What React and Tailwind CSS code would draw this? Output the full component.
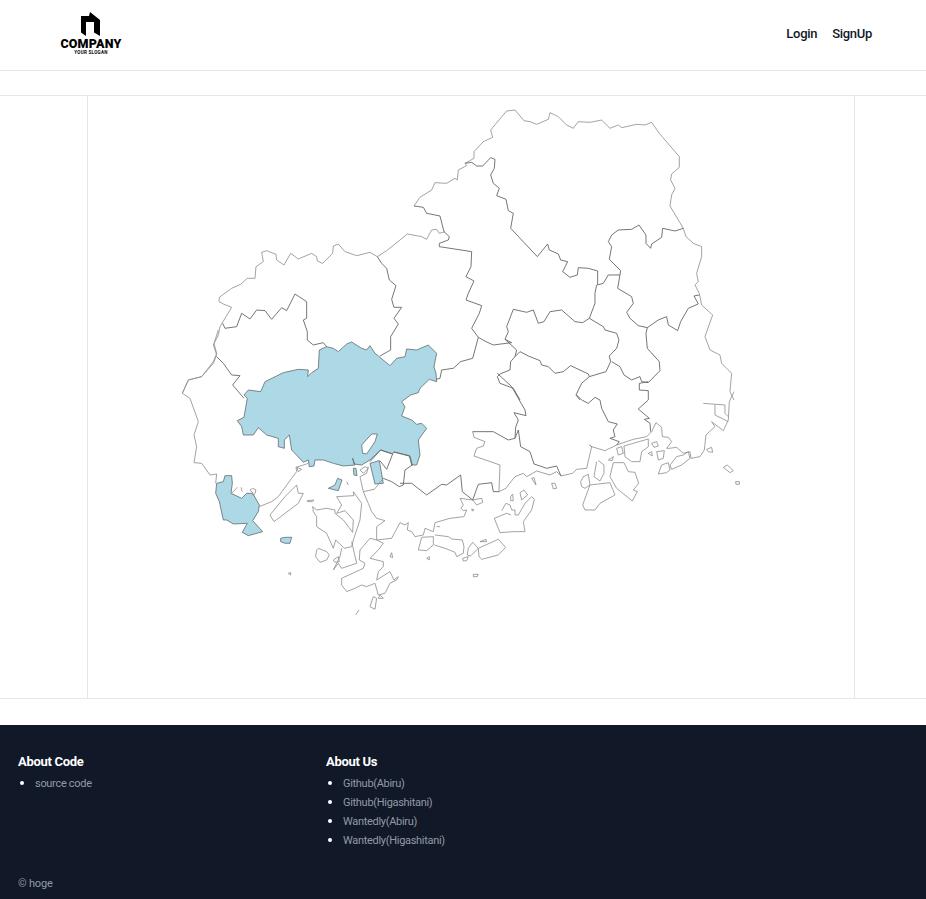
const FONT = 'Roboto, "Noto Sans", sans-serif'

// traced from the reference, grouped by the crop they were read from (3x coordinates)
const west = {
  origin: [170, 330],
  fill: [
    '448,60 470,50 490,55 505,65 530,42 545,36 575,55 590,60 600,47 615,70 625,78 660,107 680,85 705,80 710,57 740,60 775,45 800,70 792,110 798,130 800,155 778,148 750,175 745,188 722,195 695,215 705,230 695,258 725,270 740,283 755,280 770,295 745,330 750,375 740,405 725,405 718,378 672,366 668,372 632,360 600,390 575,405 552,402 548,385 555,405 520,408 490,400 460,390 435,390 432,408 418,410 415,390 400,397 365,360 358,315 343,330 343,355 325,350 325,325 290,315 265,293 250,315 220,315 215,290 202,272 222,262 232,205 222,195 235,180 272,185 285,155 340,128 385,118 415,120 413,140 425,128 445,115',
    '600,400 628,392 640,460 615,462',
    '475,475 495,465 503,445 516,450 505,482',
    '550,415 558,415 561,437 552,435',
    '140,460 160,455 165,437 185,437 187,460 183,490 215,505 230,490 248,490 268,525 265,545 248,572 278,605 235,617 217,607 232,580 190,582 170,570 160,570 148,515 137,490',
    '332,625 345,622 365,622 360,640 345,640 332,635',
  ],
  holes: ['575,345 605,312 622,312 615,335 590,372 578,370'],
  outer: [
    '145,0 132,40 140,70 130,95 95,140 55,150 37,190 60,205 85,275 72,315 80,350 72,398 95,400 120,435 140,432 137,460',
    '268,530 305,515 325,500 365,445 380,425 378,412 400,405 415,400',
    '300,555 345,500 380,465 385,490 400,490 385,520 312,575 300,555',
    '428,530 430,545 440,560 440,590 470,610 490,655 497,630 523,655 545,650 550,630 570,570 575,520 550,485 552,497 500,500 515,525 500,550 525,542 550,570 548,607 520,570 495,550 495,540 470,535 440,540 428,530',
    '545,635 560,700 515,715 505,700 490,720 510,680 515,655',
    '580,485 595,520 605,545 620,565 645,572 620,590 620,630 665,625 690,578',
    '620,630 640,640 625,660 600,685 640,695 640,710 625,725 620,750 660,725 672,750 685,740 680,750 660,760 645,790 625,795 615,760 590,770 575,765 555,775 530,785 515,765 515,745 580,715 585,700 568,690 570,660 600,625 620,630',
    '600,830 610,800 620,805 615,838 600,830',
    '630,795 640,805 625,805 630,795',
    '557,855 567,840',
    '355,730 362,728 362,735 355,730',
    '445,655 470,665 478,675 470,690 450,697 437,680 440,660 445,655',
    '490,690 505,680 508,695 495,697 490,690',
    '660,680 665,668 668,683 660,680',
    '412,512 432,510 428,515 412,515 412,512',
    '248,475 258,480 255,490 250,497 247,487 240,480 248,475',
    '185,490 202,472',
    '213,472 217,485',
    '530,455 535,465',
    '380,412 395,418 385,425 380,412',
    '570,420 585,410 595,415 580,430 570,420',
    '570,440 590,430 595,410',
    '570,440 580,485 613,478 640,445',
  ],
  inner: [
    '140,80 160,100 185,135 210,137 188,165 222,205',
    '600,395 632,360 668,372 650,418 630,392',
    '672,366 720,378 727,405 705,420 700,465 688,470 665,455 640,445',
  ],
}

const northWest = {
  origin: [170, 220],
  outer: [
    '37,520 55,480 95,470 130,430 140,405 130,375 145,345 150,320 185,262 160,252 147,245 148,232 185,205 212,193 232,175 255,175 258,140 280,125 275,97 290,92 318,103 320,120 342,135 362,100 385,117 425,100 440,110 442,123 458,130 488,100 490,78 505,72 525,95 560,107 600,97 622,110 650,92 690,60 712,42 755,50 770,58 785,30 800,28 808,40 825,35',
  ],
  inner: [
    '622,110 635,130 650,145 658,180 678,197 665,238 672,262 695,262 672,295 685,312 662,350 662,390 630,408',
    '158,310 165,325 200,320 215,280 240,297 260,270 285,272 305,298 335,263 350,272 375,222 410,245 410,295 400,300 412,335 412,360 430,375 460,368 470,380',
  ],
}

const north = {
  origin: [400, 100],
  outer: [
    '42,318 60,292 95,270 105,248 140,250 165,235 172,240 175,210 200,197 195,190 222,175 222,155 250,125 278,112 272,90 320,33 345,30 372,62 390,65 410,73 445,58 450,38 475,50 500,75 520,85 535,65 570,67 605,60 630,85 655,75 665,83 710,73 735,75 755,67 778,100 838,170 838,202 815,222 812,240 825,265 815,285 810,318 850,385 858,410 880,430 905,440 905,470 890,520 895,545 885,555 898,580 905,615 938,645 915,710 930,750 960,765 965,790 995,820 990,875 1002,900',
  ],
  inner: [
    '42,318 70,322 80,340 120,348 132,395 148,410 145,420 118,430 118,440 215,455 213,500 198,530 222,543 205,580 198,600 245,617 238,640 215,685 235,712 218,775 182,785 160,805 125,810 120,835 108,838',
    '195,190 215,187 230,198 248,198 272,173 285,178 283,205 272,225 280,250 298,265 290,287 318,298 325,332 340,340 332,385 412,470 443,432 448,450 475,462 482,480 503,485 488,515 510,532 532,525 535,503 565,505 593,513 593,555 610,550 625,525 660,525 662,512 628,478 635,440 625,425 635,405 655,390 695,388 717,375 738,405 738,430 752,445 755,432 785,412 788,385 825,393 850,385',
    '660,525 653,565 695,590 700,610 680,637 690,655 715,677 742,683 775,660 800,650 805,675 833,692 842,665 865,625 895,612 882,588 898,585',
    '590,555 585,580 585,610 568,655 548,668 525,665 485,630 450,635 432,665 415,670 400,630 380,637 340,628 320,680 325,695 315,718 335,728 280,735 258,725 235,712',
    '568,655 610,680 615,690 650,700 657,720 650,745 628,768 632,785 618,815 568,830',
    '742,683 738,700 742,745 778,785 780,812 745,848 725,845 720,830 695,840 672,825 660,800 635,785',
    '315,718 350,750 345,770 332,785 330,810 300,822 292,830 300,850 340,865 360,900',
    '345,770 360,755 385,768 420,782 425,795 445,800 465,820 490,815 512,797 565,822 568,830 545,850 528,885 540,900',
  ],
}

const southEast = {
  origin: [400, 340],
  outer: [
    '1002,155 988,185 985,240 970,272 935,245 945,260 918,285 913,330 900,350 873,355 870,335 850,340 830,322 808,325 800,325 815,305 805,292 787,290 785,262 768,248 755,275 740,290',
    '910,190 975,195 975,220 985,230',
    '945,195 945,225 985,245',
    '218,275 222,292 255,305 250,318 230,325 222,348 300,375 297,455 318,445 325,435 345,410 370,400 380,410 410,393 450,405 470,395 483,408 518,400 530,388 560,385 575,320 615,332 650,315 700,298 740,290',
    '548,495 570,435 630,428 645,465 600,490 585,510 555,510 548,495',
    '542,425 550,410 565,403 570,435 555,445 545,440 542,425',
    '595,362 612,375 612,400 600,423 582,410 590,365',
    '625,360 640,350 637,362 625,360',
    '630,410 640,368 672,368 685,395 705,397 716,430 700,450 712,455 697,483 650,445 630,410',
    '650,325 665,320 670,340 655,345 650,325',
    '672,318 700,310 745,297 745,320 725,335 720,365 695,365 675,350 672,318',
    '755,310 770,305 775,318 762,322 755,310',
    '745,340 755,335 757,348 745,340',
    '770,335 793,332 790,355 775,360 770,335',
    '775,402 785,375 805,368 810,390 800,398 775,402',
    '810,375 830,350 850,345 865,335 870,355 845,375 815,388 810,375',
    '920,328 935,322 938,337 925,335 920,328',
    '970,382 982,375 1000,392 990,398 970,382',
    '1007,425 1018,425 1018,433 1008,433 1007,425',
    '395,415 402,413 408,435 395,415',
    '455,430 465,430 470,445 460,447 455,430',
    '332,470 338,462 340,482 332,482 332,470',
    '360,458 372,450 383,465 365,480 360,458',
    '305,512 318,490 330,495 335,510 345,510 345,525 355,525 375,490 395,470 403,478 395,510 370,545 375,575 340,575 300,578 283,535 300,528 320,520 333,525',
    '218,480 245,475 248,487 230,495 218,480',
    '215,507 222,510 217,513 215,507',
    '110,560 120,560',
    '240,605 258,598 260,605 240,605',
    '205,625 218,607 235,625 212,648 202,645 205,625',
    '235,625 295,598 317,622 295,645 245,658 237,650 235,625',
    '188,655 205,650 200,662 190,663 188,655',
    '220,703 235,703 232,710 220,710 220,703',
    '80,655 88,650 88,660 80,655',
    '55,630 65,592 100,590 100,615 80,632 55,630',
    '105,585 145,590 155,597 187,600 192,620 190,640 170,650 165,637 135,625 103,615',
    '218,480 180,475 190,495 183,505 190,512 200,510 192,530 150,535 105,548 100,575 75,565 70,585 45,590 35,575 22,570 25,548 15,555 0,548',
  ],
  inner: [
    '0,430 35,430 80,465 125,433 140,435 182,405 187,455 218,480 235,433 275,428 280,455 297,455',
    '218,275 280,275 325,300 345,295 355,270 362,320 390,335 402,372 420,378 440,385 470,378 483,408',
    '292,100 335,140 375,210 378,227 342,218 355,240 347,262 345,295',
    '530,165 545,180 565,190 585,172 600,180 605,205 625,245 652,252 640,270 645,290 630,295 658,305 650,315',
    '745,125 718,130 718,150 745,152 745,180 715,207 748,235 733,238 750,250 752,275',
    '575,320 568,315',
  ],
}

const MapLayer = ({ layer }) => (
  <g transform={`translate(${layer.origin[0]} ${layer.origin[1]}) scale(0.3333)`}>
    {layer.fill?.map((p, i) => (
      <polygon key={i} points={p} fill="#add8e6" stroke="#5f6b70" strokeWidth="0.8" vectorEffect="non-scaling-stroke" />
    ))}
    {layer.holes?.map((p, i) => (
      <polygon key={i} points={p} fill="#fff" stroke="#5f6b70" strokeWidth="0.8" vectorEffect="non-scaling-stroke" />
    ))}
    {layer.outer?.map((p, i) => (
      <polyline key={i} points={p} fill="none" stroke="#8c8c8c" strokeWidth="0.8" vectorEffect="non-scaling-stroke" />
    ))}
    {layer.inner?.map((p, i) => (
      <polyline key={i} points={p} fill="none" stroke="#666666" strokeWidth="0.9" vectorEffect="non-scaling-stroke" />
    ))}
  </g>
)

const Logo = () => (
  <div className="flex w-[62px] flex-col items-center">
    <svg width="20" height="24" viewBox="0 0 20 24" className="block">
      <path d="M0 4h8l1-4 10 8v16l-6-3.5V10H5v14l-5-3.5z" fill="#000" />
    </svg>
    <div className="mt-[1px] text-[12.5px] font-black leading-[13px] tracking-[0.2px] text-black">COMPANY</div>
    <div className="text-[4.5px] font-bold leading-[5px] tracking-[0.3px] text-black">YOUR SLOGAN</div>
  </div>
)

const FooterColumn = ({ title, links }) => (
  <div className="w-[308px]">
    <h3 className="text-[13px] font-bold leading-[19px] tracking-[-0.3px] text-white">{title}</h3>
    <ul className="mt-[2px] list-disc pl-[17px] text-white marker:text-[14px] marker:text-white">
      {links.map(link => (
        <li key={link} className="h-[19px] text-[11px] leading-[19px] tracking-[-0.3px]">
          <a href="#" className="text-[#929aa8]">{link}</a>
        </li>
      ))}
    </ul>
  </div>
)

export default function App() {
  return (
    <div className="min-h-[899px] bg-white" style={{ fontFamily: FONT }}>
      <header className="flex h-[71px] items-start justify-between border-b border-[#e5e7eb] pl-[60px] pr-[54px]">
        <div className="pt-[12px]">
          <Logo />
        </div>
        <nav className="flex gap-[15px] pt-[25px] text-[13px] font-medium leading-[18px] tracking-[-0.3px] text-[#111827]">
          <a href="#">Login</a>
          <a href="#">SignUp</a>
        </nav>
      </header>

      <main className="mt-[24px] border-y border-[#e5e7eb]">
        <div className="ml-[87px] h-[602px] w-[768px] border-x border-[#e5e7eb]">
          <svg viewBox="88 96 766 602" className="block h-full w-full">
            <MapLayer layer={west} />
            <MapLayer layer={northWest} />
            <MapLayer layer={north} />
            <MapLayer layer={southEast} />
          </svg>
        </div>
      </main>

      <footer className="mt-[26px] h-[174px] bg-[#111827] px-[18px] pt-[27px]">
        <div className="flex h-[124px]">
          <FooterColumn title="About Code" links={['source code']} />
          <FooterColumn
            title="About Us"
            links={['Github(Abiru)', 'Github(Higashitani)', 'Wantedly(Abiru)', 'Wantedly(Higashitani)']}
          />
        </div>
        <p className="text-[11px] leading-[16px] tracking-[-0.2px] text-[#929aa8]">© hoge</p>
      </footer>
    </div>
  )
}
